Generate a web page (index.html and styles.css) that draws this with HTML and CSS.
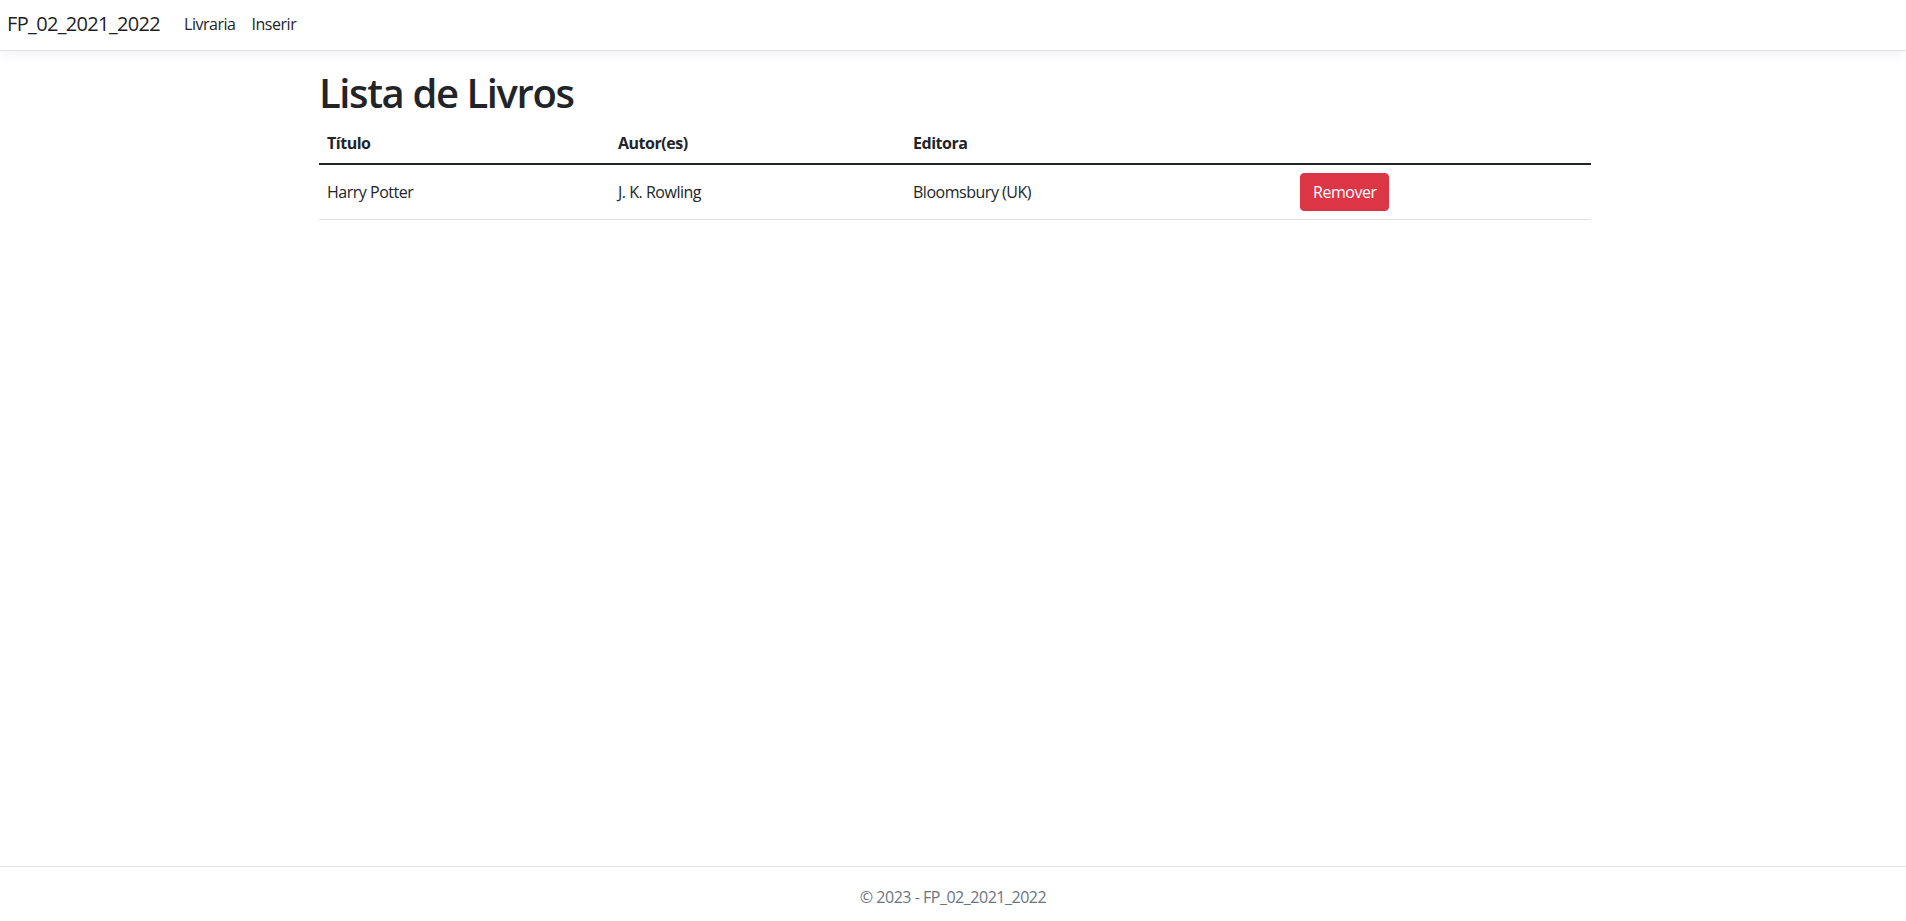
FILE: index.html
```html
<!DOCTYPE html>
<html lang="pt">
<head>
<meta charset="utf-8">
<title>Lista de Livros - FP_02_2021_2022</title>
<link rel="stylesheet" href="styles.css">
</head>
<body>
<header>
  <nav class="navbar">
    <a class="brand" href="#">FP_02_2021_2022</a>
    <ul class="nav">
      <li><a class="nav-link" href="#">Livraria</a></li>
      <li><a class="nav-link" href="#">Inserir</a></li>
    </ul>
  </nav>
</header>
<main class="main">
  <div class="container">
    <h1 class="title">Lista de Livros</h1>
    <table class="table">
      <colgroup>
        <col class="c1"><col class="c2"><col class="c3"><col class="c4">
      </colgroup>
      <thead>
        <tr>
          <th>Título</th>
          <th>Autor(es)</th>
          <th>Editora</th>
          <th></th>
        </tr>
      </thead>
      <tbody>
        <tr>
          <td>Harry Potter</td>
          <td>J. K. Rowling</td>
          <td>Bloomsbury (UK)</td>
          <td><button class="btn-danger" type="button">Remover</button></td>
        </tr>
      </tbody>
    </table>
  </div>
</main>
<footer class="footer">&copy; 2023 - FP_02_2021_2022</footer>
</body>
</html>
```

FILE: styles.css
```css
* { box-sizing: border-box; }
html, body { margin: 0; padding: 0; }
body {
  font-family: "Open Sans", "Noto Sans", "Liberation Sans", sans-serif;
  font-size: 16px;
  line-height: 1.5;
  letter-spacing: -0.03em;
  color: #212529;
  background: #fff;
  height: 100vh;
  display: flex;
  flex-direction: column;
  overflow: hidden;
}
a { text-decoration: none; }

.navbar {
  height: 51px;
  display: flex;
  align-items: center;
  padding: 0 7px;
  border-bottom: 1px solid #dee2e6;
  box-shadow: 0 4px 12px rgba(0,0,0,.05);
  background: #fff;
}
.brand {
  font-size: 20px;
  letter-spacing: -0.033em;
  color: rgba(0,0,0,.9);
  margin-right: 16px;
  line-height: 30px;
  padding-bottom: 2px;
}
.nav {
  list-style: none;
  margin: 0;
  padding: 0 0 2px;
  display: flex;
}
.nav-link {
  display: block;
  padding: 0 8px;
  color: #212529;
  font-size: 16px;
}

.main { flex: 1; }
.container {
  width: 1272px;
  margin: 18px auto 0;
  position: relative;
  left: 2px;
}
.title {
  font-size: 40px;
  font-weight: 600;
  line-height: 48px;
  letter-spacing: -0.035em;
  margin: 0 0 6px;
}
.table {
  width: 100%;
  border-collapse: collapse;
  table-layout: fixed;
}
.c1 { width: 291px; }
.c2 { width: 295px; }
.c3 { width: 387px; }
.c4 { width: 299px; }
.table th {
  text-align: left;
  font-weight: 700;
  padding: 8px;
  border-bottom: 2px solid #212529;
}
.table td {
  padding: 8px;
  border-bottom: 1px solid #dee2e6;
  vertical-align: middle;
}
.btn-danger {
  font-family: inherit;
  font-size: 16px;
  line-height: 24px;
  letter-spacing: -0.03em;
  padding: 6px 12px;
  color: #fff;
  background: #dc3545;
  border: 1px solid #dc3545;
  border-radius: 4px;
  cursor: pointer;
}

.footer {
  border-top: 1px solid #dee2e6;
  height: 55px;
  line-height: 60px;
  text-align: center;
  color: #6c757d;
  white-space: nowrap;
}
```
